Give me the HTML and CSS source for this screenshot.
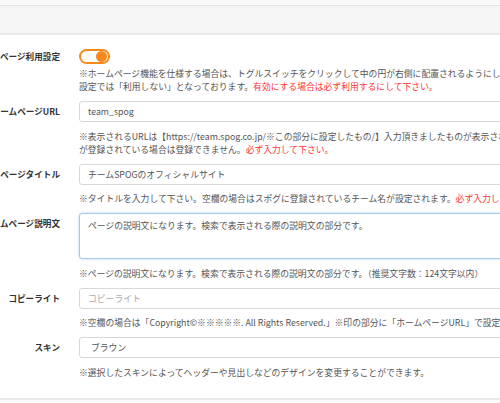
FILE: index.html
```html
<!DOCTYPE html>
<html lang="ja">
<head>
<meta charset="utf-8">
<title>ホームページ設定</title>
<link rel="stylesheet" href="styles.css">
</head>
<body>
<div class="page">
  <section class="card">
    <div class="card-head"></div>
    <div class="card-body">
      <form class="form">
        <div class="label label--switch">ホームページ利用設定</div>
        <div class="field">
          <label class="switch"><input type="checkbox" checked><span class="track"></span></label>
          <p class="hint hint--switch">※ホームページ機能を仕様する場合は、トグルスイッチをクリックして中の円が右側に配置されるようにして下さい。初期<br>設定では「利用しない」となっております。<em class="req">有効にする場合は必ず利用するにして下さい。</em></p>
        </div>

        <div class="label">ホームページURL</div>
        <div class="field">
          <input class="control" type="text" value="team_spog">
          <p class="hint">※表示されるURLは【https://team.spog.co.jp/※この部分に設定したもの/】入力頂きましたものが表示されます。同じURL<br>が登録されている場合は登録できません。<em class="req">必ず入力して下さい。</em></p>
        </div>

        <div class="label">ホームページタイトル</div>
        <div class="field">
          <input class="control" type="text" value="チームSPOGのオフィシャルサイト">
          <p class="hint">※タイトルを入力して下さい。空欄の場合はスポグに登録されているチーム名が設定されます。<em class="req">必ず入力して下さい。</em></p>
        </div>

        <div class="label">ホームページ説明文</div>
        <div class="field">
          <textarea class="control control--area">ページの説明文になります。検索で表示される際の説明文の部分です。</textarea>
          <p class="hint">※ページの説明文になります。検索で表示される際の説明文の部分です。（推奨文字数：124文字以内）</p>
        </div>

        <div class="label">コピーライト</div>
        <div class="field">
          <input class="control" type="text" placeholder="コピーライト">
          <p class="hint">※空欄の場合は「Copyright©※※※※※. All Rights Reserved.」※印の部分に「ホームページURL」で設定した値が入ります。</p>
        </div>

        <div class="label">スキン</div>
        <div class="field">
          <select class="control control--select">
            <option selected>ブラウン</option>
            <option>ブルー</option>
            <option>グリーン</option>
          </select>
          <p class="hint">※選択したスキンによってヘッダーや見出しなどのデザインを変更することができます。</p>
        </div>
      </form>
    </div>
  </section>
</div>
</body>
</html>
```

FILE: styles.css
```css
html, body {
  margin: 0;
  overflow: hidden;
}

body {
  width: 500px;
  height: 403px;
  background: #fafafa;
  font-family: "Noto Sans CJK JP", "Noto Sans", sans-serif;
  color: #444;
}

.page {
  padding-top: 5px;
}

.card {
  background: #fff;
  border-top: 1px solid #e4e4e4;
  border-bottom: 2px solid #e9e9e9;
}

.card-head {
  height: 27px;
  background: #f5f5f5;
  border-bottom: 2px solid #e8e8e8;
}

.card-body {
  padding: 14px 0 19px;
}

.form {
  display: grid;
  grid-template-columns: 170px 531px;
  column-gap: 19px;
  row-gap: 8px;
  margin: 0 0 0 -110px;
}

.label {
  font-size: 8.6px;
  font-weight: 700;
  color: #333;
  text-align: right;
  line-height: 21px;
  white-space: nowrap;
}

.label--switch {
  line-height: 15px;
}

.field {
  min-width: 0;
}

.control {
  display: block;
  box-sizing: border-box;
  width: 100%;
  height: 21px;
  margin: 0;
  padding: 0 8px;
  border: 1px solid #d8d8d8;
  border-radius: 3px;
  background: #fff;
  font-family: "Noto Sans CJK JP", "Noto Sans", sans-serif;
  font-size: 8.8px;
  color: #555;
  outline: none;
}

.control::placeholder {
  color: #aaa;
}

.control--area {
  height: 46px;
  padding-top: 5px;
  line-height: 13px;
  resize: none;
  border-color: #a5c9ee;
  box-shadow: 0 0 3px rgba(102, 165, 230, 0.45);
}

.control--select {
  appearance: none;
  -webkit-appearance: none;
  padding-left: 11px;
}

.hint {
  margin: 7.5px 0 0;
  font-size: 8.8px;
  line-height: 13px;
  color: #555;
  white-space: nowrap;
}

.hint--switch {
  margin-top: 3px;
}

.req {
  font-style: normal;
  color: #f33;
}

.switch {
  position: relative;
  display: block;
  width: 31px;
  height: 15px;
}

.switch input {
  position: absolute;
  inset: 0;
  width: 100%;
  height: 100%;
  margin: 0;
  opacity: 0;
}

.track {
  position: relative;
  display: block;
  box-sizing: border-box;
  width: 31px;
  height: 15px;
  border: 2px solid #f68a1e;
  border-radius: 8px;
  background: #fff;
}

.track::after {
  content: "";
  position: absolute;
  top: 0;
  right: 1px;
  width: 11px;
  height: 11px;
  border-radius: 50%;
  background: #f68a1e;
}
```
